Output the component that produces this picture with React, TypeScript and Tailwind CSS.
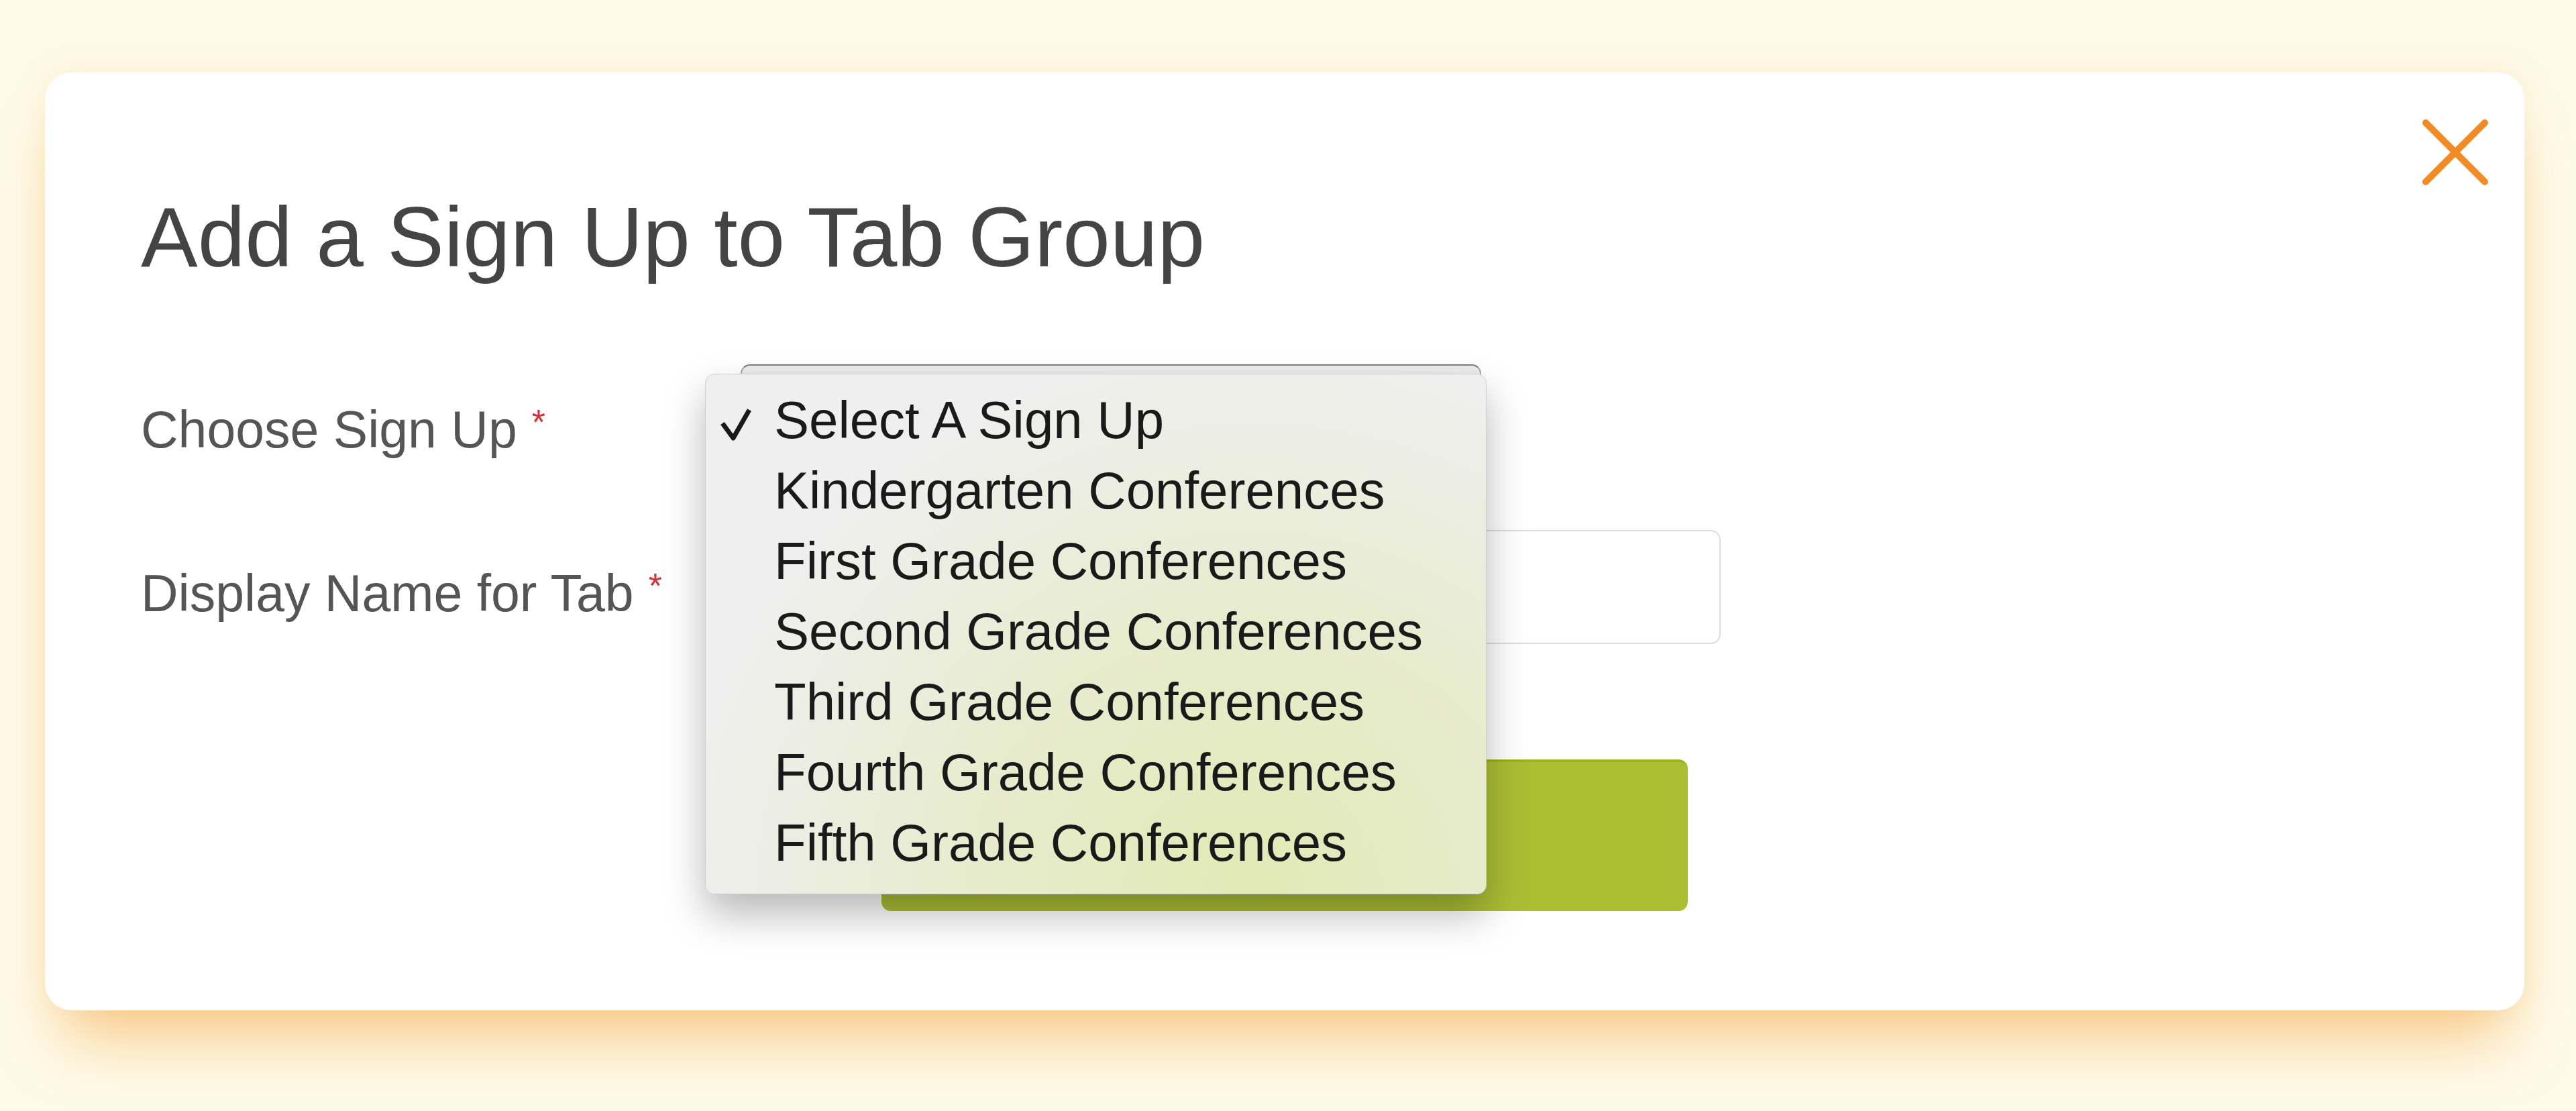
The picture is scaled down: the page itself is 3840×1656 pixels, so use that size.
import type { ReactNode } from "react";

const options = [
  "Select A Sign Up",
  "Kindergarten Conferences",
  "First Grade Conferences",
  "Second Grade Conferences",
  "Third Grade Conferences",
  "Fourth Grade Conferences",
  "Fifth Grade Conferences",
];

export default function App() {
  return (
    <div className="min-h-screen bg-[#fefae8] pl-[67px] pr-[77px] pt-[108px] font-['Liberation_Sans',Arial,sans-serif]">
      <div className="relative flex h-[1398px] flex-col rounded-[40px] bg-white pl-[143px] pt-[170px] shadow-[0_70px_90px_-30px_rgba(245,170,75,0.6),0_0_40px_rgba(245,210,140,0.25)]">
        <button type="button" className="absolute right-[53px] top-[69px] h-[100px] w-[100px]" aria-label="Close">
          <svg viewBox="0 0 100 100" className="h-full w-full">
            <path d="M6 6 L94 94 M94 6 L6 94" stroke="#f28a25" strokeWidth="10" strokeLinecap="round" fill="none" />
          </svg>
        </button>

        <h1 className="text-[127px] font-normal leading-[150px] text-[#444444]">Add a Sign Up to Tab Group</h1>

        <div className="mt-[115px] flex">
          <Label pt="pt-[51px]">Choose Sign Up</Label>
          <div className="h-[170px] w-[1104px] rounded-[14px] border-2 border-[#a8a8a8] border-t-[#7c7c7c] bg-[#ececec]" />
        </div>

        <div className="mt-[77px] flex">
          <Label pt="pt-[48px]">Display Name for Tab</Label>
          <input
            type="text"
            className="h-[170px] w-[1461px] rounded-[15px] border-2 border-[#dcdcdc] bg-white px-6 text-[77px] outline-none"
          />
        </div>

        <button
          type="button"
          aria-label="Save"
          className="-ml-[143px] mt-[172px] h-[226px] w-[1202px] self-center rounded-[14px] border-t-[4px] border-[#9db31c] bg-[#aabe34]"
        />

        {/* native select popup, open over the form */}
        <div className="absolute left-[984px] top-[449px] h-[776px] w-[1165px] rounded-[14px] border border-[#cfcfcf] bg-[radial-gradient(ellipse_at_70%_100%,#e1eab5_0%,#e8ecd0_40%,#efefef_75%)] pb-[25px] pt-[16px] shadow-[0_30px_60px_rgba(0,0,0,0.28)]">
          {options.map((o, i) => (
            <div key={o} className="relative pl-[102px] text-[78px] leading-[105px] text-[#1a1a1a]">
              {i === 0 && (
                <svg viewBox="0 0 46 50" className="absolute left-[22px] top-[33px] h-[50px] w-[46px]">
                  <path d="M3 24 L19 46 L43 4" stroke="#1a1a1a" strokeWidth="7" strokeLinejoin="round" fill="none" />
                </svg>
              )}
              {o}
            </div>
          ))}
        </div>
      </div>
    </div>
  );
}

function Label({ children, pt }: { children: ReactNode; pt: string }) {
  return (
    <div className={`w-[894px] shrink-0 ${pt} text-[77px] leading-[92px] text-[#555555]`}>
      {children}
      <span className="relative -top-[20px] ml-[22px] text-[52px] text-[#d3313a]">*</span>
    </div>
  );
}
